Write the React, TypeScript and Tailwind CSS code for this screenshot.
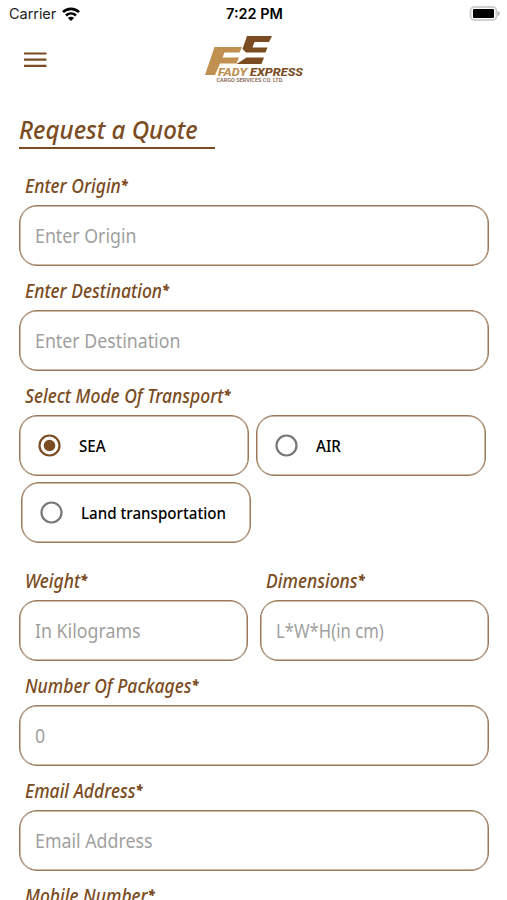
import * as React from "react";

const BRAND = "#7b4c22";

function StatusBar() {
  return (
    <div className="flex h-7 items-center justify-between pr-[7px] pl-[9px] font-['Inter',sans-serif] text-[14.5px] text-[#222]">
      <div className="flex w-[160px] items-center gap-[6px]">
        <span className="tracking-[-0.05px]">Carrier</span>
        <svg width="18" height="15" viewBox="0 0 18 15" fill="none" stroke="#000" strokeWidth="2.6">
          <path d="M1 5.2C5.4.8 12.6.8 17 5.2" />
          <path d="M4 8.5c2.9-2.7 7.1-2.7 10 0" />
          <path d="M9 14 5.9 10.900c1.700-1.500 4.500-1.500 6.200 0Z" fill="#000" stroke="none" />
        </svg>
      </div>
      <span className="font-semibold text-black">7:22 PM</span>
      <div className="flex w-[160px] justify-end">
        <svg width="31" height="16" viewBox="0 0 31 16">
          <rect x="1.5" y="1" width="26" height="13" rx="4" fill="#fff" stroke="#cfcfcf" strokeWidth="2" />
          <rect x="4" y="3" width="21" height="9" rx="1" fill="#000" />
          <path d="M28.5 5c3 1 3 4 0 5Z" fill="#b5b5b5" />
        </svg>
      </div>
    </div>
  );
}

function Logo() {
  return (
    <svg width="100" height="48" viewBox="0 0 100 48" className="ml-[157px]">
      <path d="M10.5 11H38L35.500 16.500H20.500L18.500 21.500H35L32.500 27.500H16L11 39H1Z" fill="#bf9050" />
      <path d="M43 0H68L65 6H50.500L48.500 11.500H63.500L61.500 16.500H42L38.500 13Z" fill={BRAND} />
      <path d="M42.500 21.500H60L57.500 28H32.500Z" fill={BRAND} />
      <g fontFamily="Roboto, sans-serif" fontStyle="italic" fontWeight="800" fontSize="11.5">
        <text x="14" y="39.5" textLength="29" lengthAdjust="spacingAndGlyphs" fill="#bf9050">FADY</text>
        <text x="46" y="39.5" textLength="53" lengthAdjust="spacingAndGlyphs" fill={BRAND}>EXPRESS</text>
      </g>
      <text
        x="12.5"
        y="46"
        fontSize="5"
        textLength="67"
        lengthAdjust="spacingAndGlyphs"
        fontFamily="Roboto, sans-serif"
        fontWeight="500"
        fill="#7d5a45"
      >
        CARGO SERVICES CO. LTD.
      </text>
    </svg>
  );
}

function Label({ text }: { text: string }) {
  return (
    <div className="flex h-[44px] items-center pt-[6px] pl-[6px] text-[19px] font-medium whitespace-nowrap text-[#7b4c22] italic">
      <span className="origin-left scale-x-[0.92]">
        {text}
        <span className="align-[3px] text-[14px] leading-none font-black">*</span>
      </span>
    </div>
  );
}

function Field({ label, placeholder, narrow }: { label: string; placeholder: string; narrow?: boolean }) {
  return (
    <label className="block min-w-0 flex-1">
      <Label text={label} />
      <div className="h-[61px] rounded-[18px] border border-[#9b7859] px-[15px] shadow-[inset_0_0_0_0.5px_#9b7859]">
        <input
          placeholder={placeholder}
          className={`block h-full w-full origin-left text-[19px] font-[450] outline-none placeholder:text-[#9f9f9f] ${
            narrow ? "scale-x-[0.88]" : "scale-x-[0.935]"
          }`}
        />
      </div>
    </label>
  );
}

function ModeOption({ label, checked }: { label: string; checked?: boolean }) {
  return (
    <div className="flex h-[61px] w-[230px] items-center gap-[18px] rounded-[18px] border border-[#9b7859] pl-[18px] shadow-[inset_0_0_0_0.5px_#9b7859]">
      <svg width="23" height="23" viewBox="0 0 23 23" fill="none">
        <circle cx="11.5" cy="11.5" r="10" stroke={checked ? BRAND : "#777"} strokeWidth="2.2" />
        {checked ? <circle cx="11.5" cy="11.5" r="5.8" fill={BRAND} /> : null}
      </svg>
      <span className="origin-left scale-x-[0.89] text-[17px] font-medium whitespace-nowrap text-black">{label}</span>
    </div>
  );
}

export default function App() {
  return (
    <main className="h-[900px] w-full overflow-hidden bg-white font-['Noto_Sans',sans-serif]">
      <StatusBar />
      <header className="flex h-[64px] items-center pl-[24px]">
        <svg width="23" height="16" viewBox="0 0 23 16" stroke={BRAND} strokeWidth="2.2">
          <path d="M0 1.5H22.5M0 7.7H22.5M0 13.9H22.5" />
        </svg>
        <Logo />
      </header>
      <div className="pr-[18px] pl-[19px]">
        <h1 className="mt-[20px] h-[37px] w-[196px] border-b-2 border-[#7b4c22] text-[26px] leading-[35px] font-medium whitespace-nowrap text-[#7b4c22] italic">
          <span className="inline-block origin-left scale-x-[0.925]">Request a Quote</span>
        </h1>
        <div className="h-[12px]" />
        <Field label="Enter Origin" placeholder="Enter Origin" />
        <Field label="Enter Destination" placeholder="Enter Destination" />
        <Label text="Select Mode Of Transport" />
        <div className="flex gap-[7px]">
          <ModeOption label="SEA" checked />
          <ModeOption label="AIR" />
        </div>
        <div className="mt-[6px] mb-[13px] ml-[2px]">
          <ModeOption label="Land transportation" />
        </div>
        <div className="flex gap-[12px]">
          <Field label="Weight" placeholder="In Kilograms" />
          <Field label="Dimensions" placeholder="L*W*H(in cm)" narrow />
        </div>
        <Field label="Number Of Packages" placeholder="0" />
        <Field label="Email Address" placeholder="Email Address" />
        <Label text="Mobile Number" />
      </div>
    </main>
  );
}
